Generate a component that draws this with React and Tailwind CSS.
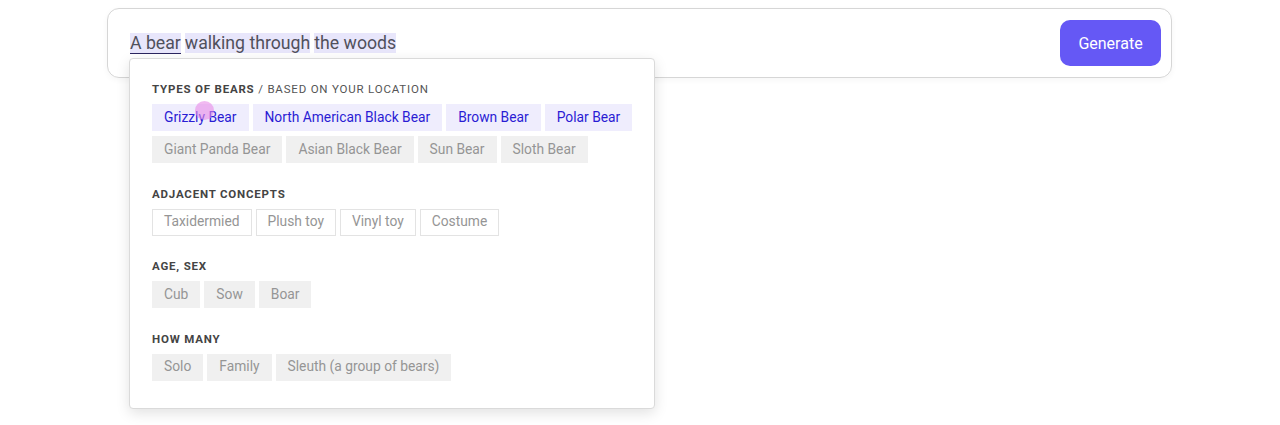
import React from "react";

const sections = [
  {
    title: "TYPES OF BEARS",
    sub: "/ BASED ON YOUR LOCATION",
    rows: [
      { kind: "active", items: ["Grizzly Bear", "North American Black Bear", "Brown Bear", "Polar Bear"] },
      { kind: "filled", items: ["Giant Panda Bear", "Asian Black Bear", "Sun Bear", "Sloth Bear"] },
    ],
  },
  {
    title: "ADJACENT CONCEPTS",
    rows: [{ kind: "outline", items: ["Taxidermied", "Plush toy", "Vinyl toy", "Costume"] }],
  },
  {
    title: "AGE, SEX",
    rows: [{ kind: "filled", items: ["Cub", "Sow", "Boar"] }],
  },
  {
    title: "HOW MANY",
    rows: [{ kind: "filled", items: ["Solo", "Family", "Sleuth (a group of bears)"] }],
  },
];

const chipStyles = {
  active: "bg-[#efedfd] text-[#2a1cd4] border border-transparent",
  filled: "bg-[#f0f0f0] text-[#959595] border border-transparent",
  outline: "bg-white text-[#959595] border border-[#e3e3e3]",
};

const Chip = ({ label, kind }) => (
  <span
    className={`h-[27px] px-[11px] flex items-center shrink-0 whitespace-nowrap text-[13.8px] leading-none ${chipStyles[kind]}`}
  >
    {label}
  </span>
);

const App = () => {
  return (
    <div className="w-full h-[425px] bg-white pt-2" style={{ fontFamily: "Roboto, 'Noto Sans', sans-serif" }}>
      <div className="relative w-[1065px] ml-[107px] h-[70px] rounded-[12px] border border-[#d6d6d6] shadow-[0_2px_6px_rgba(0,0,0,0.04)] flex items-center justify-between pl-[22px] pr-[10px]">
        <div className="text-[17.7px] text-[#50505c] flex items-center whitespace-nowrap">
          <span className="bg-[#e8e6fb] leading-[20px] border-b border-[#2b2560]">A bear</span>
          <span className="w-[4px]" />
          <span className="bg-[#e8e6fb] leading-[20px]">walking through</span>
          <span className="w-[4px]" />
          <span className="bg-[#e8e6fb] leading-[20px]">the woods</span>
        </div>
        <button className="w-[101px] h-[46px] rounded-[10px] bg-[#6558f5] text-white text-[16px] pt-[2px]">
          Generate
        </button>

        {/* suggestions dropdown */}
        <div className="absolute left-[21px] top-[49px] w-[526px] bg-white border border-[#dadada] rounded-[4px] shadow-[0_4px_14px_rgba(0,0,0,0.12)] px-[22px] pt-[21px] pb-[27px] flex flex-col gap-[21.5px] z-10">
          {sections.map((s) => (
            <div key={s.title} className="flex flex-col">
              <div className="text-[11.5px] leading-[18px] tracking-[0.07em] text-[#444] mb-[6px] whitespace-nowrap">
                <span className="font-bold">{s.title}</span>
                {s.sub && <span className="text-[#555]"> {s.sub}</span>}
              </div>
              <div className="flex flex-col gap-[5px]">
                {s.rows.map((r, i) => (
                  <div key={i} className="flex gap-[4px]">
                    {r.items.map((it) => (
                      <Chip key={it} label={it} kind={r.kind} />
                    ))}
                  </div>
                ))}
              </div>
            </div>
          ))}
          <span className="absolute left-[65px] top-[42px] w-[19px] h-[19px] rounded-full bg-[#e88ae8]/60" />
        </div>
      </div>
    </div>
  );
};

export default App;
